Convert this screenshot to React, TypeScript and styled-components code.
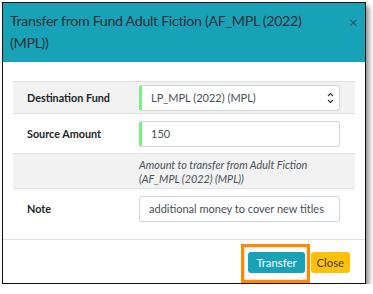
import React from "react";
import styled, { createGlobalStyle } from "styled-components";

const Global = createGlobalStyle`
  html, body { margin: 0; padding: 0; background: #ffffff; }
  body { font-family: Lato, "Open Sans", sans-serif; color: #212529; }
  * { box-sizing: border-box; }
`;

const Dialog = styled.div`
  margin: 2px 0 0 2px;
  width: 364px;
  height: 282px;
  border: 1px solid #111;
  background: #fff;
  display: flex;
  flex-direction: column;
  box-shadow: 3px 4px 5px rgba(0, 0, 0, 0.45);
`;

const Header = styled.div`
  background: #17a2b8;
  height: 59px;
  flex: none;
  display: flex;
  align-items: flex-start;
  justify-content: space-between;
  padding: 7px 7px 0 7px;
`;

const Title = styled.h4`
  margin: 0;
  font-size: 14.3px;
  letter-spacing: -0.35px;
  font-weight: 400;
  line-height: 22px;
  color: #2b3136;
  width: 320px;
`;

const CloseX = styled.span`
  font-size: 16px;
  line-height: 22px;
  color: #2a5c66;
  margin-top: 1px;
`;

const Body = styled.div`
  padding: 19px 10px 0 10px;
`;

const Table = styled.div`
  display: grid;
  grid-template-columns: 126px minmax(0, 1fr);
`;

const Row = styled.div<{ $shade?: boolean; $h: number }>`
  display: contents;
  & > * {
    background: ${(p) => (p.$shade ? "#f2f2f2" : "#fff")};
    border-top: 1px solid #dee2e6;
    height: ${(p) => p.$h}px;
  }
`;

const Label = styled.div`
  display: flex;
  align-items: center;
  padding-left: 14px;
  font-size: 10.8px;
  font-weight: 700;
  color: #212529;
`;

const Cell = styled.div`
  display: flex;
  align-items: center;
  padding-right: 15px;
`;

const HelpCell = styled.div`
  padding: 4px 15px 0 0;
  font-size: 10.8px;
  font-style: italic;
  line-height: 14px;
  color: #495057;
`;

const Field = styled.div<{ $valid?: boolean }>`
  width: 100%;
  height: 26px;
  border: 1px solid #ced4da;
  border-left: ${(p) => (p.$valid ? "3px solid #77f07f" : "1px solid #ced4da")};
  border-radius: 3px;
  display: flex;
  align-items: center;
  justify-content: space-between;
  padding: 0 5px 0 9px;
  font-size: 11px;
  white-space: nowrap;
  color: #495057;
  background: #fff;
`;

const Arrows = styled.svg`
  display: block;
`;

const Footer = styled.div`
  margin-top: auto;
  border-top: 1px solid #dee2e6;
  height: 44px;
  flex: none;
  display: flex;
  justify-content: flex-end;
  align-items: flex-start;
  padding: 4px 15px 0 0;
`;

const Highlight = styled.div`
  border: 3px solid #ff8a00;
  padding: 5px 2px 7px 4px;
  box-shadow: inset 0 0 3px rgba(0, 0, 0, 0.3);
`;

const Button = styled.button<{ $variant: "info" | "warning" }>`
  display: block;
  border: none;
  border-radius: 3px;
  height: 21px;
  padding: 0 ${(p) => (p.$variant === "info" ? "8px" : "6px")};
  font-family: Lato, "Open Sans", sans-serif;
  font-size: 11.3px;
  color: ${(p) => (p.$variant === "info" ? "#fff" : "#3b3b3b")};
  background: ${(p) => (p.$variant === "info" ? "#17a2b8" : "#ffc107")};
  box-shadow: ${(p) => (p.$variant === "info" ? "0 0 0 1px rgba(255,255,255,0.6)" : "none")};
`;

const CloseWrap = styled.div`
  padding: 8px 0 0 1px;
`;

export default function App() {
  return (
    <>
      <Global />
      <Dialog>
        <Header>
          <Title>Transfer from Fund Adult Fiction (AF_MPL (2022) (MPL))</Title>
          <CloseX>×</CloseX>
        </Header>
        <Body>
          <Table>
            <Row $shade $h={32}>
              <Label>Destination Fund</Label>
              <Cell>
                <Field $valid>
                  <span>LP_MPL (2022) (MPL)</span>
                  <Arrows width="7" height="14" viewBox="0 0 7 14">
                    <path d="M1 5 L3.5 2.5 L6 5 M1 9 L3.5 11.5 L6 9" fill="none" stroke="#333" strokeWidth="1.2" />
                  </Arrows>
                </Field>
              </Cell>
            </Row>
            <Row $h={40}>
              <Label>Source Amount</Label>
              <Cell>
                <Field $valid>150</Field>
              </Cell>
            </Row>
            <Row $shade $h={35}>
              <Label />
              <HelpCell>Amount to transfer from Adult Fiction (AF_MPL (2022) (MPL))</HelpCell>
            </Row>
            <Row $h={40}>
              <Label>Note</Label>
              <Cell>
                <Field>additional money to cover new titles</Field>
              </Cell>
            </Row>
          </Table>
        </Body>
        <Footer>
          <Highlight>
            <Button $variant="info">Transfer</Button>
          </Highlight>
          <CloseWrap>
            <Button $variant="warning">Close</Button>
          </CloseWrap>
        </Footer>
      </Dialog>
    </>
  );
}
